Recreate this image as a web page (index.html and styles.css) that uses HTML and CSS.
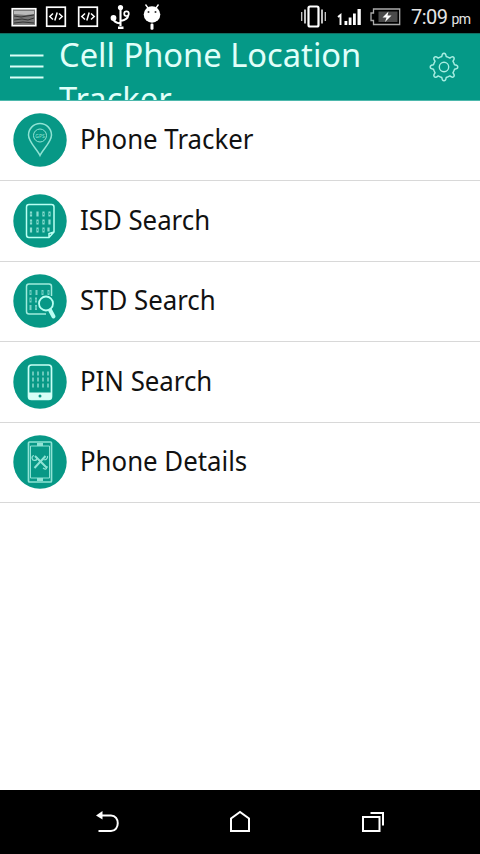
FILE: index.html
```html
<!DOCTYPE html>
<html lang="en">
<head>
<meta charset="utf-8">
<title>Cell Phone Location Tracker</title>
<link rel="stylesheet" href="styles.css">
</head>
<body>
<div class="screen">
  <div class="status">
    <svg class="status-left" width="180" height="33" viewBox="0 0 180 33">
      <rect x="12.2" y="8.7" width="23.6" height="17" fill="#777" stroke="#fff" stroke-width="1.6"/>
      <path d="M14 11h20v3l-8 1-12-1z" fill="#bbb"/>
      <path d="M14 16l7 1 6-1 7-1M14 20l8-1 6 1 6-2M14 23l9-1 11 1" fill="none" stroke="#333" stroke-width="1"/>
      <g fill="none" stroke="#fff" stroke-width="1.7">
        <rect x="46.7" y="7.2" width="18.6" height="19"/>
        <path d="M53 13.5l-3.2 3 3.2 3M59 13.5l3.2 3-3.2 3M57.2 12.5l-2.4 8" stroke-width="1.5"/>
        <rect x="78.7" y="7.2" width="18.6" height="19"/>
        <path d="M85 13.5l-3.2 3 3.2 3M91 13.5l3.2 3-3.2 3M89.2 12.5l-2.4 8" stroke-width="1.5"/>
        <path d="M120.500 8v18M113.500 18.500c0 3 3 4.500 7 5M120.500 21c5-1 7.500-3 7.500-5.500" stroke-width="2.100"/>
        <circle cx="126.500" cy="13.700" r="2.300" stroke-width="1.700"/>
      </g>
      <g fill="#fff">
        <circle cx="120.500" cy="7.500" r="2.600"/><circle cx="113.500" cy="18" r="2.900"/><rect x="118" y="26.500" width="5.500" height="2.500"/>
        <circle cx="152" cy="14.500" r="8.300"/><rect x="150.500" y="23.500" width="3" height="6.300" rx="1.200"/>
      </g>
      <path d="M148 8l-2.500-3.500M156 8l2.500-3.500" stroke="#fff" stroke-width="1.300"/>
      <circle cx="148.500" cy="12" r="1" fill="#333"/><circle cx="155.500" cy="12" r="1" fill="#333"/>
    </svg>
    <svg class="status-right" width="106" height="33" viewBox="298 0 106 33">
      <g fill="none" stroke="#fff">
        <rect x="308.500" y="6.500" width="10" height="20" rx="1.500" stroke-width="2.200"/>
        <path d="M305 9.500v14M322 9.500v14" stroke-width="1.500"/>
        <path d="M301.700 12v9M325.300 12v9" stroke-width="1.300" stroke="#ccc"/>
      </g>
      <path d="M338 17l2.500-2v10" fill="none" stroke="#fff" stroke-width="1.900"/>
      <path d="M344.500 21h2.800v4h-2.800zM348.700 17.500h2.800v7.500h-2.800zM353 13.500h2.800v11.500h-2.800zM357.500 9h3.300v16h-3.300z" fill="#fff"/>
      <path d="M373.500 9h26.200v15.500h-26.200v-4h-2.500v-7.500h2.500z" fill="none" stroke="#aaa" stroke-width="1.300"/>
      <rect x="378.500" y="11.500" width="19" height="10.500" fill="#4a4a4a"/>
      <path d="M388.500 11.500l-6 6h4l-1.500 4.500 6.500-6.500h-4z" fill="#fff"/>
    </svg>
    <div class="clock">7:09<span class="pm">pm</span></div>
  </div>
  <header class="bar">
    <svg class="menu" width="34" height="67" viewBox="0 0 34 67"><path d="M0 22.500h33.500M0 33.500h33.500M0 44.500h33.500" stroke="#d9fff7" stroke-width="2.200"/></svg>
    <h1 class="title">Cell Phone Location<br>Tracker</h1>
    <svg class="gear" width="30" height="30" viewBox="-15 -15 30 30" fill="none" stroke="#a9eee2" stroke-width="1.400" stroke-linejoin="round">
      <circle r="4.700"/>
      <path d="M-2.200-10.500Q-1.900-13.800 0-13.800T2.200-10.500Q3.800-10 5.800-8.900Q8.400-11.100 9.700-9.700T8.900-5.800Q10-3.800 10.500-2.200Q13.800-1.900 13.800 0T10.500 2.200Q10 3.800 8.900 5.800Q11.100 8.400 9.700 9.700T5.800 8.900Q3.800 10 2.200 10.500Q1.900 13.800 0 13.800T-2.200 10.500Q-3.800 10-5.800 8.900Q-8.400 11.100-9.700 9.700T-8.900 5.800Q-10 3.800-10.500 2.200Q-13.800 1.900-13.800 0T-10.500-2.200Q-10-3.800-8.900-5.800Q-11.100-8.400-9.700-9.700T-5.800-8.900Q-3.800-10-2.200-10.500Z"/>
    </svg>
  </header>
  <main class="list">
    <div class="row">
      <svg class="icon" viewBox="0 0 54 54"><circle cx="27" cy="27" r="26.700" fill="#079886"/>
        <g fill="none" stroke="#90e3d4"><path d="M27 42.500C24 36 15.500 29 15.500 22a11.500 11.500 0 0 1 23 0C38.500 29 30 36 27 42.500z" stroke-width="1.500"/><circle cx="27" cy="22.500" r="6.500" stroke-width="1"/></g>
        <text class="gps" x="27" y="24.700" text-anchor="middle">GPS</text></svg>
      <span class="label">Phone Tracker</span>
    </div>
    <div class="row">
      <svg class="icon" viewBox="0 0 54 54"><circle cx="27" cy="27" r="26.700" fill="#079886"/>
        <path d="M16 10.500h22.500q2.500 0 2.500 2.500v25l-5 5.500H16q-2.500 0-2.500-2.500V13q0-2.500 2.500-2.500zM36 43.500v-4l5-1.500" fill="none" stroke="#b9fff2" stroke-width="1.500"/>
        <path d="M18 17.500v5M24.500 17.500v5M30.500 17.500v5M36.500 17.500v5M18 25.500v5M24.500 25.500v5M30.500 25.500v5M36.500 25.500v5M18 33.500v5M24.500 33.500v5M30.500 33.500v5M35.500 33.500v4" stroke="#8adccf" stroke-width="2.200"/>
        <path d="M18 19v2M30.500 19v2M36.500 19v2M18 27v2M24.500 27v2M30.500 27v2M24.500 35v2M30.500 35v2" stroke="#3bb3a4" stroke-width="1"/></svg>
      <span class="label">ISD Search</span>
    </div>
    <div class="row">
      <svg class="icon" viewBox="0 0 54 54"><circle cx="27" cy="27" r="26.700" fill="#079886"/>
        <path d="M33 40H16q-2.500 0-2.500-2.500V12.500q0-2.500 2.500-2.500h20q2.500 0 2.500 2.500V22" fill="none" stroke="#a0eadc" stroke-width="1.500"/>
        <path d="M17.500 16v5M23.500 16v5M29.500 16v5M35.500 16v5M17.500 23.500v5M23 23.500v5M17.500 31v5M23 31v5" stroke="#79d2c5" stroke-width="2"/>
        <path d="M17.500 17.500v2M29.500 17.500v2M35.500 17.500v2M17.500 25v2M23 25v2M23 32.500v2" stroke="#3bb3a4" stroke-width="1"/>
        <path d="M37 36l3.500 6.500" stroke="#b9fff2" stroke-width="4" stroke-linecap="round"/>
        <circle cx="33" cy="29.500" r="7" fill="#079886" stroke="#b9fff2" stroke-width="1.800"/></svg>
      <span class="label">STD Search</span>
    </div>
    <div class="row">
      <svg class="icon" viewBox="0 0 54 54"><circle cx="27" cy="27" r="26.700" fill="#079886"/>
        <rect x="15.500" y="10" width="23" height="34.500" rx="3" fill="none" stroke="#c9fff5" stroke-width="1.700"/>
        <path d="M15.500 37.500h23v4q0 3-3 3h-17q-3 0-3-3z" fill="#d6fff7"/><circle cx="27" cy="41" r="1.500" fill="#079886"/>
        <path d="M20 16.500v4M25 16.500v4M30 16.500v4M35 16.500v4M20 22.500v4M25 22.500v4M30 22.500v4M35 22.500v4M20 28.500v4M25 28.500v4M30 28.500v4M35 28.500v4" stroke="#79d2c5" stroke-width="1.700"/></svg>
      <span class="label">PIN Search</span>
    </div>
    <div class="row">
      <svg class="icon" viewBox="0 0 54 54"><circle cx="27" cy="27" r="26.700" fill="#079886"/>
        <g fill="none" stroke="#8fe3d5"><rect x="15.500" y="7" width="23" height="40" rx="1" stroke-width="1.700"/><path d="M17.500 11h19v32h-19z"/>
        <path d="M22 21l12 12M32.500 21L21.500 33" stroke-width="2"/><path d="M21 20.500a2.500 2.500 0 1 0 3 2M34.500 21a3 3 0 0 1-4 3.500M30 33q4 3 4-2" stroke-width="1.200"/></g>
        <path d="M24 8h6v3h-6zM24 43h6v3h-6z" fill="#8fe3d5"/></svg>
      <span class="label">Phone Details</span>
    </div>
  </main>
  <nav class="nav">
    <svg width="480" height="64" viewBox="0 790 480 64" fill="none" stroke="#fff" stroke-width="2">
      <path d="M101 815.500h10c9 0 9 15.500 0 15.500H98.500"/><path d="M96 815.500l6.500-4.500v8.500z" fill="#fff" stroke="none"/>
      <path d="M231 831V818.500l9-6.500 9 6.500V831z"/>
      <path d="M363 817h16.500v14H363zM370.500 813h12.500v12.500"/>
    </svg>
  </nav>
</div>
</body>
</html>
```
FILE: styles.css
```css
* { box-sizing: border-box; }
body { margin: 0; background: #fff; font-family: "Noto Sans", "Open Sans", sans-serif; }
.screen { width: 480px; height: 854px; display: flex; flex-direction: column; overflow: hidden; }
.status { height: 33px; flex: none; display: flex; background: #000; color: #e4e4e4; }
.status svg { flex: none; }
.status-right { margin-left: 118px; }
.clock { margin-left: 7px; font: 20px/34px Roboto, sans-serif; letter-spacing: -0.5px; white-space: nowrap; }
.pm { font-size: 14px; letter-spacing: -0.7px; margin-left: 4px; }
.bar { height: 67.500px; flex: none; display: flex; background: #059987; overflow: hidden; border-top: 1px solid #146e62; border-bottom: 1px solid #4db8ac; }
.menu { flex: none; margin: -1px 0 0 10px; }
.title { width: 370px; flex: none; margin: -2px 0 0 15px; font-size: 33.500px; font-weight: 400; line-height: 44px; color: #e0fff9; white-space: nowrap; transform: scaleX(0.975); transform-origin: 0 0; }
.gear { margin-top: 18px; }
.list { flex: 1; background: #fff; }
.row { height: 80.500px; display: flex; align-items: center; padding-left: 13px; border-bottom: 1px solid #d8d8d8; }
.icon { width: 54px; height: 54px; flex: none; }
.gps { font-size: 5px; fill: #90e3d4; }
.label { margin-left: 13px; font-size: 27.500px; line-height: 36px; color: #111; white-space: nowrap; margin-top: -2px; transform: scaleX(0.938); transform-origin: 0 0; }
.nav { height: 64px; flex: none; background: #000; }
```
